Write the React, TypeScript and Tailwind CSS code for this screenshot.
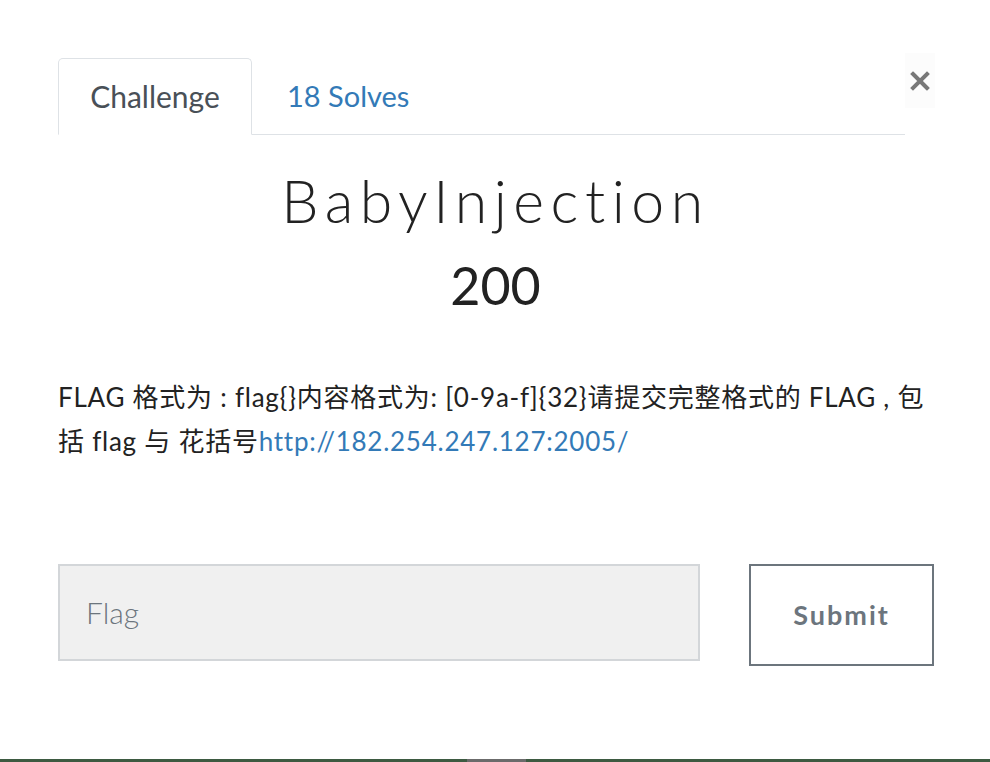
// Challenge modal: tabs, title, description and flag submit form.

export default function App() {
  return (
    <div className="flex min-h-[762px] flex-col bg-white font-['Lato','Noto_Sans_CJK_SC',sans-serif] text-[#212529]">
      <div className="flex-1 pl-[58px] pr-[55px]">
        <div className="mt-[53px] flex items-start">
          <div className="mt-[5px] flex flex-1 border-b border-[#dee2e6]">
            <div className="-mb-px flex h-[77px] w-[194px] items-center justify-center rounded-t-[5px] border border-b-white border-[#dee2e6] bg-white text-[30px] text-[#495057]">
              Challenge
            </div>
            <div className="flex h-[76px] items-center pl-[35px] text-[29px] text-[#337ab7]">
              18 Solves
            </div>
          </div>
          <button className="flex h-[55px] w-[30px] items-start justify-center bg-[#fcfcfc] pt-[18px]">
            <svg width="20" height="20" viewBox="0 0 20 20">
              <path d="M3 3L17 17M17 3L3 17" stroke="#787878" strokeWidth="4" strokeLinecap="square" />
            </svg>
          </button>
        </div>

        <div className="pr-[2px] text-center">
          <h2 className="mt-[31px] text-[59px] font-light leading-[70px] tracking-[6.5px] text-[#222]">
            BabyInjection
          </h2>
          <h3 className="mt-[19px] text-[52px] leading-[60px] text-[#222]">200</h3>
        </div>

        <p className="mt-[60px] text-[26px] leading-[44px] tracking-[0.75px] text-[#222]">
          FLAG 格式为 : flag{"{}"}内容格式为: [0-9a-f]{"{32}"}请提交完整格式的 FLAG , 包括 flag 与 花括号
          <a className="text-[#337ab7]">http://182.254.247.127:2005/</a>
        </p>

        <div className="mt-[101px] flex items-start">
          <div className="flex h-[97px] w-[642px] items-center border-2 border-[#d3d6d9] bg-[#f0f0f0] pl-[26px] text-[30px] font-light text-[#6c757d]">
            Flag
          </div>
          <button className="ml-[49px] h-[102px] w-[185px] border-2 border-[#6c757d] bg-white text-[27px] font-bold tracking-[2px] text-[#6c757d]">
            Submit
          </button>
        </div>
      </div>

      <div className="flex h-[3px]">
        <div className="w-[467px] bg-[#3d5a41]" />
        <div className="w-[59px] bg-[#6b6b6b]" />
        <div className="flex-1 bg-[#3d5a41]" />
      </div>
    </div>
  )
}
